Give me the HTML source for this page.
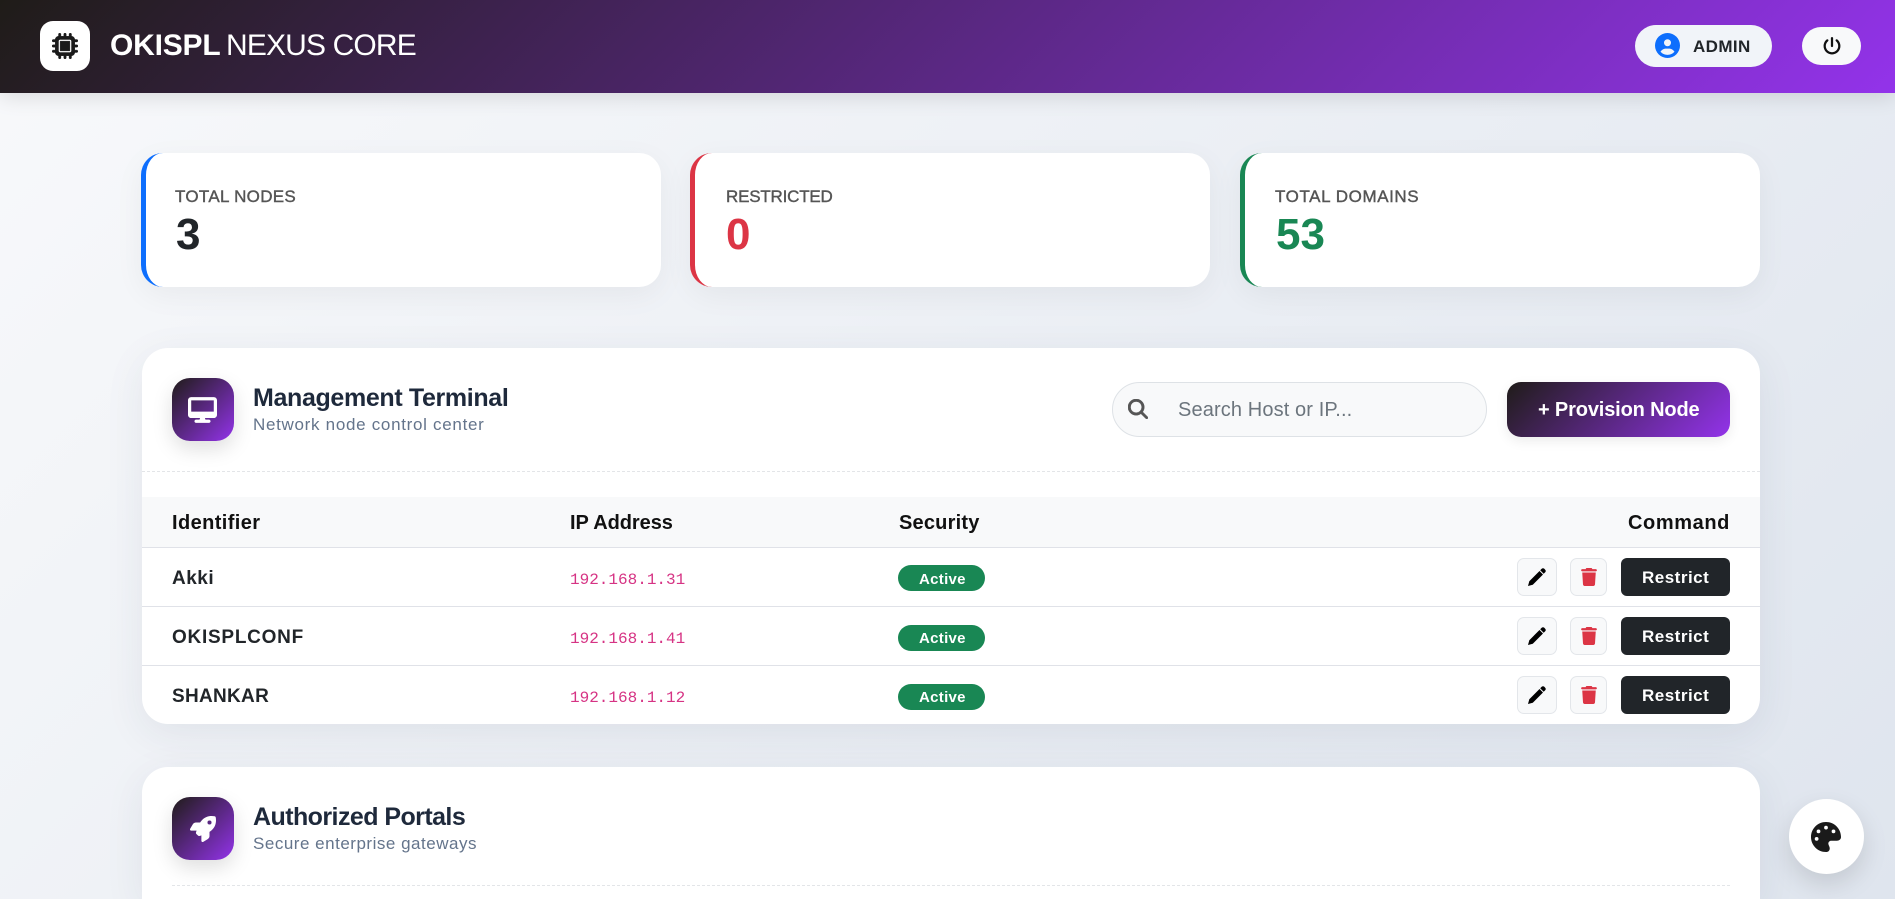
<!DOCTYPE html>
<html lang="en"><head><meta charset="utf-8"><title>OKISPL NEXUS CORE</title>
<style>
*{box-sizing:border-box;margin:0;padding:0}
html,body{width:1895px;height:899px;overflow:hidden}
body{position:relative;background:linear-gradient(135deg,#f8f9fb 0%,#dfe5ee 100%);font-family:"Liberation Sans",Arial,sans-serif;color:#212529}
.a,.t{position:absolute}
.t{line-height:0;white-space:nowrap}
svg{position:absolute;display:block}
.hdr{left:0;top:0;width:1895px;height:93px;background:linear-gradient(135deg,#1f1c18,#9333ea);box-shadow:0 4px 20px rgba(0,0,0,.12)}
.card{top:153px;height:134px;width:520px;background:#fff;border-radius:22px;border-left:5px solid;box-shadow:0 8px 30px rgba(0,0,0,.05)}
.lbl{top:196.5px;font-size:17px;color:#555;-webkit-text-stroke:.4px #555}
.num{top:234.5px;font-size:44px;font-weight:700}
.panel{left:142px;width:1618px;background:#fff;border-radius:26px;box-shadow:0 10px 40px rgba(40,50,80,.08)}
.ico{left:172px;width:62px;height:63px;border-radius:18px;background:linear-gradient(135deg,#1f1c18,#9333ea);box-shadow:0 8px 20px rgba(0,0,0,.13)}
.ttl{left:253px;font-size:25px;font-weight:700;color:#1e293b}
.sub{left:253px;font-size:17px;color:#64748b}
.th{top:522.5px;font-size:20px;font-weight:700;color:#111}
.nm{left:172px;font-size:19px;font-weight:700;color:#212529}
.ip{left:570px;font-size:16px;font-family:"Liberation Mono",monospace;color:#d63384}
.bdg{left:898px;width:87px;height:26px;border-radius:13px;background:#198754}
.ac{left:919px;font-size:15px;font-weight:700;color:#fff;letter-spacing:.3px}
.ib{height:38px;background:#f8f9fa;border:1px solid #e3e6ea;border-radius:7px}
.rb{left:1621px;width:109px;height:38px;background:#212529;border-radius:6px}
.rt{left:1642px;font-size:17px;font-weight:700;color:#fff;letter-spacing:.5px}
.ln{left:142px;width:1618px;height:1px;background:#e0e2e8}
</style></head><body>

<div class="a hdr"></div>
<div class="a" style="left:40px;top:21px;width:50px;height:50px;background:#fff;border-radius:13px"></div>
<svg style="left:52px;top:33px" width="26" height="26" viewBox="0 0 512 512" fill="#1a1a1a" stroke="#1a1a1a" stroke-width="8"><path d="M176 24c0-13.3-10.7-24-24-24s-24 10.7-24 24V64c-35.3 0-64 28.7-64 64H24c-13.3 0-24 10.7-24 24s10.7 24 24 24H64v56H24c-13.3 0-24 10.7-24 24s10.7 24 24 24H64v56H24c-13.3 0-24 10.7-24 24s10.7 24 24 24H64c0 35.3 28.7 64 64 64v40c0 13.3 10.7 24 24 24s24-10.7 24-24V448h56v40c0 13.3 10.7 24 24 24s24-10.7 24-24V448h56v40c0 13.3 10.7 24 24 24s24-10.7 24-24V448c35.3 0 64-28.7 64-64h40c13.3 0 24-10.7 24-24s-10.7-24-24-24H448V280h40c13.3 0 24-10.7 24-24s-10.7-24-24-24H448V176h40c13.3 0 24-10.7 24-24s-10.7-24-24-24H448c0-35.3-28.7-64-64-64V24c0-13.3-10.7-24-24-24s-24 10.7-24 24V64H280V24c0-13.3-10.7-24-24-24s-24 10.7-24 24V64H176V24zM160 128H352c17.7 0 32 14.3 32 32V352c0 17.7-14.3 32-32 32H160c-17.7 0-32-14.3-32-32V160c0-17.7 14.3-32 32-32zm192 32H160V352H352V160z"/></svg>
<div class="t" style="left:110px;top:46px;font-size:30px;color:#fff;font-weight:700;letter-spacing:-.2px">OKISPL</div>
<div class="t" style="left:226px;top:46px;font-size:30px;color:#fff;letter-spacing:-.85px">NEXUS CORE</div>

<div class="a" style="left:1635px;top:25px;width:137px;height:42px;background:#f1f4f9;border-radius:21px"></div>
<svg style="left:1655px;top:33px" width="25" height="25" viewBox="0 0 512 512" fill="#0d6efd"><path d="M399 384.2C376.9 345.8 335.4 320 288 320H224c-47.4 0-88.9 25.8-111 64.2c35.2 39.2 86.2 63.8 143 63.8s107.8-24.7 143-63.8zM0 256a256 256 0 1 1 512 0A256 256 0 1 1 0 256zm256 16a72 72 0 1 0 0-144 72 72 0 1 0 0 144z"/></svg>
<div class="t" style="left:1693px;top:46.5px;font-size:17px;font-weight:700;color:#212529;letter-spacing:.4px">ADMIN</div>
<div class="a" style="left:1802px;top:27px;width:59px;height:38px;background:#f8f9fa;border-radius:19px"></div>
<svg style="left:1823px;top:37px" width="18" height="18" viewBox="0 0 512 512" fill="#111"><path d="M288 32c0-17.7-14.3-32-32-32s-32 14.3-32 32V256c0 17.7 14.3 32 32 32s32-14.3 32-32V32zM143.5 120.6c13.6-11.3 15.4-31.5 4.1-45.1s-31.5-15.4-45.1-4.1C49.7 115.4 16 181.8 16 256c0 132.5 107.5 240 240 240s240-107.5 240-240c0-74.2-33.8-140.6-86.6-184.6c-13.6-11.3-33.8-9.4-45.1 4.1s-9.4 33.8 4.1 45.1c38.9 32.3 63.5 81 63.5 135.4c0 97.2-78.8 176-176 176s-176-78.8-176-176c0-54.4 24.7-103.1 63.5-135.4z"/></svg>

<div class="a card" style="left:141px;border-color:#0d6efd"></div>
<div class="t lbl" style="left:175px;letter-spacing:.3px">TOTAL NODES</div>
<div class="t num" style="left:176px">3</div>
<div class="a card" style="left:690px;border-color:#dc3545"></div>
<div class="t lbl" style="left:726px;letter-spacing:-.2px">RESTRICTED</div>
<div class="t num" style="left:726px;color:#dc3545">0</div>
<div class="a card" style="left:1240px;border-color:#198754"></div>
<div class="t lbl" style="left:1275px;letter-spacing:.58px">TOTAL DOMAINS</div>
<div class="t num" style="left:1276px;color:#198754">53</div>

<div class="a panel" style="top:348px;height:376px"></div>
<div class="a ico" style="top:378px"></div>
<svg style="left:188px;top:397px" width="29" height="26" viewBox="0 0 576 512" fill="#fff"><path d="M64 0C28.7 0 0 28.7 0 64V352c0 35.3 28.7 64 64 64H240l-10.7 32H160c-17.7 0-32 14.3-32 32s14.3 32 32 32H416c17.700 0 32-14.3 32-32s-14.3-32-32-32H346.7L336 416H512c35.3 0 64-28.7 64-64V64c0-35.3-28.7-64-64-64H64zM512 64V288H64V64H512z"/></svg>
<div class="t ttl" style="top:398px;letter-spacing:-.35px">Management Terminal</div>
<div class="t sub" style="top:424.7px;letter-spacing:.7px">Network node control center</div>

<div class="a" style="left:1112px;top:382px;width:375px;height:55px;background:#f8f9fa;border:1px solid #dee2e6;border-radius:28px"></div>
<svg style="left:1128px;top:399px" width="20" height="20" viewBox="0 0 512 512" fill="#555" stroke="#555" stroke-width="12"><path d="M416 208c0 45.9-14.9 88.3-40 122.7L502.6 457.4c12.5 12.5 12.5 32.8 0 45.3s-32.8 12.5-45.3 0L330.7 376c-34.4 25.2-76.8 40-122.7 40C93.1 416 0 322.9 0 208S93.1 0 208 0S416 93.1 416 208zM208 352a144 144 0 1 0 0-288 144 144 0 1 0 0 288z"/></svg>
<div class="t" style="left:1178px;top:409.5px;font-size:20px;color:#6c757d;letter-spacing:.12px">Search Host or IP...</div>
<div class="a" style="left:1507px;top:382px;width:223px;height:55px;background:linear-gradient(135deg,#1f1c18,#9333ea);border-radius:14px;box-shadow:0 4px 12px rgba(0,0,0,.08)"></div>
<div class="t" style="left:1538px;top:410px;font-size:20px;font-weight:700;color:#fff;letter-spacing:-.15px">+ Provision Node</div>

<div class="a" style="left:142px;top:471px;width:1618px;border-top:1px dashed #e3e5e8"></div>
<div class="a" style="left:142px;top:497px;width:1618px;height:50px;background:#f8f9fa"></div>
<div class="t th" style="left:172px;letter-spacing:.4px">Identifier</div>
<div class="t th" style="left:570px;letter-spacing:-.05px">IP Address</div>
<div class="t th" style="left:899px;letter-spacing:.2px">Security</div>
<div class="t th" style="left:1628px;letter-spacing:.6px">Command</div>

<div class="a ln" style="top:547px"></div>
<div class="a ln" style="top:606px"></div>
<div class="a ln" style="top:665px"></div>

<div class="t nm" style="top:579px;letter-spacing:.5px">Akki</div>
<div class="t ip" style="top:580px">192.168.1.31</div>
<div class="a bdg" style="top:565px"></div><div class="t ac" style="top:579.5px">Active</div>
<div class="a ib" style="left:1517px;top:558px;width:40px"></div>
<svg style="left:1528px;top:568px" width="18" height="18" viewBox="0 0 18 18" fill="#000"><path d="M0 18L1.3 13.2 11.5 3 15 6.500 4.800 16.700zM12.200 2.300L13.700 .8Q15 -.3 16.300 .8L17.200 1.700Q18.300 3 17.200 4.300L15.700 5.800z"/></svg>
<div class="a ib" style="left:1570px;top:558px;width:37px"></div>
<svg style="left:1581px;top:568px" width="16" height="18" viewBox="0 0 448 512" fill="#dc3545"><path d="M135.2 17.7L128 32H32C14.3 32 0 46.3 0 64S14.3 96 32 96H416c17.7 0 32-14.3 32-32s-14.3-32-32-32H320l-7.2-14.3C307.4 6.8 296.3 0 284.2 0H163.8c-12.1 0-23.2 6.8-28.6 17.7zM416 128H32L53.2 467c1.6 25.3 22.6 45 47.9 45H346.9c25.3 0 46.3-19.7 47.9-45L416 128z"/></svg>
<div class="a rb" style="top:558px"></div><div class="t rt" style="top:578px">Restrict</div>

<div class="t nm" style="top:638px;letter-spacing:.74px">OKISPLCONF</div>
<div class="t ip" style="top:639px">192.168.1.41</div>
<div class="a bdg" style="top:625px"></div><div class="t ac" style="top:638.5px">Active</div>
<div class="a ib" style="left:1517px;top:617px;width:40px"></div>
<svg style="left:1528px;top:627px" width="18" height="18" viewBox="0 0 18 18" fill="#000"><path d="M0 18L1.3 13.2 11.5 3 15 6.500 4.800 16.700zM12.200 2.300L13.700 .8Q15 -.3 16.300 .8L17.200 1.700Q18.300 3 17.200 4.300L15.700 5.800z"/></svg>
<div class="a ib" style="left:1570px;top:617px;width:37px"></div>
<svg style="left:1581px;top:627px" width="16" height="18" viewBox="0 0 448 512" fill="#dc3545"><path d="M135.2 17.7L128 32H32C14.3 32 0 46.3 0 64S14.3 96 32 96H416c17.7 0 32-14.3 32-32s-14.3-32-32-32H320l-7.2-14.3C307.4 6.8 296.3 0 284.2 0H163.8c-12.1 0-23.2 6.8-28.6 17.7zM416 128H32L53.2 467c1.6 25.3 22.6 45 47.9 45H346.9c25.3 0 46.3-19.7 47.9-45L416 128z"/></svg>
<div class="a rb" style="top:617px"></div><div class="t rt" style="top:637px">Restrict</div>

<div class="t nm" style="top:697px;letter-spacing:.3px">SHANKAR</div>
<div class="t ip" style="top:698px">192.168.1.12</div>
<div class="a bdg" style="top:684px"></div><div class="t ac" style="top:697.5px">Active</div>
<div class="a ib" style="left:1517px;top:676px;width:40px"></div>
<svg style="left:1528px;top:686px" width="18" height="18" viewBox="0 0 18 18" fill="#000"><path d="M0 18L1.3 13.2 11.5 3 15 6.500 4.800 16.700zM12.200 2.300L13.700 .8Q15 -.3 16.300 .8L17.200 1.700Q18.300 3 17.200 4.300L15.700 5.800z"/></svg>
<div class="a ib" style="left:1570px;top:676px;width:37px"></div>
<svg style="left:1581px;top:686px" width="16" height="18" viewBox="0 0 448 512" fill="#dc3545"><path d="M135.2 17.7L128 32H32C14.3 32 0 46.3 0 64S14.3 96 32 96H416c17.7 0 32-14.3 32-32s-14.3-32-32-32H320l-7.2-14.3C307.4 6.8 296.3 0 284.2 0H163.8c-12.1 0-23.2 6.8-28.6 17.7zM416 128H32L53.2 467c1.6 25.3 22.6 45 47.9 45H346.9c25.3 0 46.3-19.7 47.9-45L416 128z"/></svg>
<div class="a rb" style="top:676px"></div><div class="t rt" style="top:696px">Restrict</div>

<div class="a panel" style="top:767px;height:132px;border-radius:26px 26px 0 0"></div>
<div class="a ico" style="top:797px"></div>
<svg style="left:190px;top:816px" width="26" height="26" viewBox="0 0 512 512" fill="#fff"><path d="M156.6 384.9L125.7 354c-8.5-8.5-11.5-20.8-7.7-32.2c3-8.9 7-20.5 11.8-33.8L24 288c-8.6 0-16.6-4.6-20.9-12.1s-4.2-16.7 .2-24.1l52.5-88.5c13-21.9 36.5-35.3 61.9-35.3l82.3 0c2.4-4 4.8-7.7 7.2-11.3C289.1-4.1 411.1-8.1 483.9 5.3c11.6 2.1 20.6 11.2 22.8 22.8c13.4 72.9 9.3 194.8-111.4 276.7c-3.5 2.4-7.3 4.8-11.3 7.2v82.3c0 25.4-13.4 49-35.3 61.9l-88.5 52.5c-7.4 4.4-16.6 4.5-24.1 .2s-12.1-12.2-12.1-20.9V380.8c-14.1 4.9-26.4 8.9-35.7 11.9c-11.2 3.6-23.4 .5-31.8-7.8zM384 168a40 40 0 1 0 0-80 40 40 0 1 0 0 80z"/></svg>
<div class="t ttl" style="top:816.7px;letter-spacing:-.56px">Authorized Portals</div>
<div class="t sub" style="top:843.6px;letter-spacing:.51px">Secure enterprise gateways</div>
<div class="a" style="left:172px;top:885px;width:1558px;border-top:1px dashed #e3e5e8"></div>

<div class="a" style="left:1789px;top:799px;width:75px;height:75px;border-radius:50%;background:#fff;box-shadow:0 10px 25px rgba(0,0,0,.13)"></div>
<svg style="left:1811px;top:822px" width="30" height="30" viewBox="0 0 512 512" fill="#1a1a1a"><path d="M512 256c0 .9 0 1.8 0 2.7c-.4 36.5-33.6 61.3-70.1 61.3H344c-26.5 0-48 21.5-48 48c0 3.4 .4 6.7 1 9.9c2.1 10.2 6.5 20 10.8 29.9c6.1 13.8 12.1 27.5 12.1 42c0 31.8-21.6 60.7-53.4 62c-3.5 .1-7 .2-10.6 .2C114.6 512 0 397.4 0 256S114.6 0 256 0S512 114.6 512 256zM128 288a32 32 0 1 0 -64 0 32 32 0 1 0 64 0zm0-96a32 32 0 1 0 0-64 32 32 0 1 0 0 64zM288 96a32 32 0 1 0 -64 0 32 32 0 1 0 64 0zm96 96a32 32 0 1 0 0-64 32 32 0 1 0 0 64z"/></svg>
</body></html>
